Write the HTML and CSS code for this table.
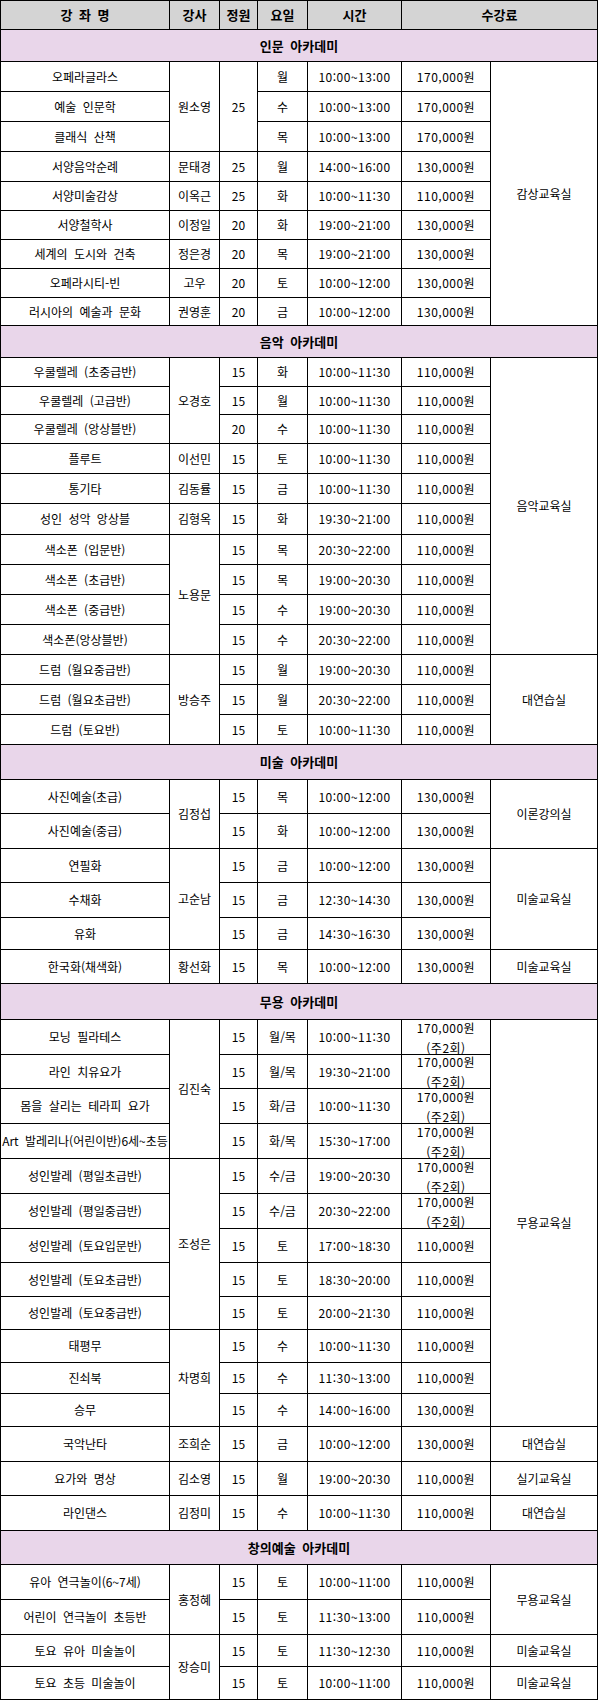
FILE: index.html
```html
<!DOCTYPE html>
<html lang="ko">
<head>
<meta charset="utf-8">
<title>강좌 안내</title>
<link rel="stylesheet" href="styles.css">
</head>
<body>
<table class="course-table">
  <colgroup>
    <col class="c-name"><col class="c-teacher"><col class="c-cap"><col class="c-day"><col class="c-time"><col class="c-fee"><col class="c-room">
  </colgroup>
  <thead>
    <tr class="h29 head">
      <th>강 좌 명</th><th>강사</th><th>정원</th><th>요일</th><th>시간</th><th colspan="2">수강료</th>
    </tr>
  </thead>
  <tbody>
    <tr class="h32 section"><td colspan="7">인문 아카데미</td></tr>
    <tr class="h30"><td>오페라글라스</td><td rowspan="3">원소영</td><td rowspan="3">25</td><td>월</td><td class="n">10:00~13:00</td><td class="n">170,000원</td><td rowspan="9">감상교육실</td></tr>
    <tr class="h30"><td>예술 인문학</td><td>수</td><td class="n">10:00~13:00</td><td class="n">170,000원</td></tr>
    <tr class="h30"><td>클래식 산책</td><td>목</td><td class="n">10:00~13:00</td><td class="n">170,000원</td></tr>
    <tr class="h30"><td>서양음악순례</td><td>문태경</td><td>25</td><td>월</td><td class="n">14:00~16:00</td><td class="n">130,000원</td></tr>
    <tr class="h29"><td>서양미술감상</td><td>이옥근</td><td>25</td><td>화</td><td class="n">10:00~11:30</td><td class="n">110,000원</td></tr>
    <tr class="h29"><td>서양철학사</td><td>이정일</td><td>20</td><td>화</td><td class="n">19:00~21:00</td><td class="n">130,000원</td></tr>
    <tr class="h29"><td>세계의 도시와 건축</td><td>정은경</td><td>20</td><td>목</td><td class="n">19:00~21:00</td><td class="n">130,000원</td></tr>
    <tr class="h29"><td>오페라시티-빈</td><td>고우</td><td>20</td><td>토</td><td class="n">10:00~12:00</td><td class="n">130,000원</td></tr>
    <tr class="h28"><td>러시아의 예술과 문화</td><td>권영훈</td><td>20</td><td>금</td><td class="n">10:00~12:00</td><td class="n">130,000원</td></tr>

    <tr class="h32 section"><td colspan="7">음악 아카데미</td></tr>
    <tr class="h29"><td>우쿨렐레 (초중급반)</td><td rowspan="3">오경호</td><td>15</td><td>화</td><td class="n">10:00~11:30</td><td class="n">110,000원</td><td rowspan="10">음악교육실</td></tr>
    <tr class="h28"><td>우쿨렐레 (고급반)</td><td>15</td><td>월</td><td class="n">10:00~11:30</td><td class="n">110,000원</td></tr>
    <tr class="h29"><td>우쿨렐레 (앙상블반)</td><td>20</td><td>수</td><td class="n">10:00~11:30</td><td class="n">110,000원</td></tr>
    <tr class="h30"><td>플루트</td><td>이선민</td><td>15</td><td>토</td><td class="n">10:00~11:30</td><td class="n">110,000원</td></tr>
    <tr class="h30"><td>통기타</td><td>김동률</td><td>15</td><td>금</td><td class="n">10:00~11:30</td><td class="n">110,000원</td></tr>
    <tr class="h31"><td>성인 성악 앙상블</td><td>김형옥</td><td>15</td><td>화</td><td class="n">19:30~21:00</td><td class="n">110,000원</td></tr>
    <tr class="h30"><td>색소폰 (입문반)</td><td rowspan="4">노용문</td><td>15</td><td>목</td><td class="n">20:30~22:00</td><td class="n">110,000원</td></tr>
    <tr class="h30"><td>색소폰 (초급반)</td><td>15</td><td>목</td><td class="n">19:00~20:30</td><td class="n">110,000원</td></tr>
    <tr class="h30"><td>색소폰 (중급반)</td><td>15</td><td>수</td><td class="n">19:00~20:30</td><td class="n">110,000원</td></tr>
    <tr class="h30"><td>색소폰(앙상블반)</td><td>15</td><td>수</td><td class="n">20:30~22:00</td><td class="n">110,000원</td></tr>
    <tr class="h30"><td>드럼 (월요중급반)</td><td rowspan="3">방승주</td><td>15</td><td>월</td><td class="n">19:00~20:30</td><td class="n">110,000원</td><td rowspan="3">대연습실</td></tr>
    <tr class="h30"><td>드럼 (월요초급반)</td><td>15</td><td>월</td><td class="n">20:30~22:00</td><td class="n">110,000원</td></tr>
    <tr class="h30"><td>드럼 (토요반)</td><td>15</td><td>토</td><td class="n">10:00~11:30</td><td class="n">110,000원</td></tr>

    <tr class="h35 section"><td colspan="7">미술 아카데미</td></tr>
    <tr class="h34"><td>사진예술(초급)</td><td rowspan="2">김정섭</td><td>15</td><td>목</td><td class="n">10:00~12:00</td><td class="n">130,000원</td><td rowspan="2">이론강의실</td></tr>
    <tr class="h35"><td>사진예술(중급)</td><td>15</td><td>화</td><td class="n">10:00~12:00</td><td class="n">130,000원</td></tr>
    <tr class="h34"><td>연필화</td><td rowspan="3">고순남</td><td>15</td><td>금</td><td class="n">10:00~12:00</td><td class="n">130,000원</td><td rowspan="3">미술교육실</td></tr>
    <tr class="h35"><td>수채화</td><td>15</td><td>금</td><td class="n">12:30~14:30</td><td class="n">130,000원</td></tr>
    <tr class="h32"><td>유화</td><td>15</td><td>금</td><td class="n">14:30~16:30</td><td class="n">130,000원</td></tr>
    <tr class="h34"><td>한국화(채색화)</td><td>황선화</td><td>15</td><td>목</td><td class="n">10:00~12:00</td><td class="n">130,000원</td><td>미술교육실</td></tr>

    <tr class="h36 section"><td colspan="7">무용 아카데미</td></tr>
    <tr class="h35"><td>모닝 필라테스</td><td rowspan="4">김진숙</td><td>15</td><td>월/목</td><td class="n">10:00~11:30</td><td class="n"><div class="two">170,000원<br>(주2회)</div></td><td rowspan="12">무용교육실</td></tr>
    <tr class="h34"><td>라인 치유요가</td><td>15</td><td>월/목</td><td class="n">19:30~21:00</td><td class="n"><div class="two">170,000원<br>(주2회)</div></td></tr>
    <tr class="h35"><td>몸을 살리는 테라피 요가</td><td>15</td><td>화/금</td><td class="n">10:00~11:30</td><td class="n"><div class="two">170,000원<br>(주2회)</div></td></tr>
    <tr class="h35"><td>Art 발레리나(어린이반)6세~초등</td><td>15</td><td>화/목</td><td class="n">15:30~17:00</td><td class="n"><div class="two">170,000원<br>(주2회)</div></td></tr>
    <tr class="h35"><td>성인발레 (평일초급반)</td><td rowspan="5">조성은</td><td>15</td><td>수/금</td><td class="n">19:00~20:30</td><td class="n"><div class="two">170,000원<br>(주2회)</div></td></tr>
    <tr class="h35"><td>성인발레 (평일중급반)</td><td>15</td><td>수/금</td><td class="n">20:30~22:00</td><td class="n"><div class="two">170,000원<br>(주2회)</div></td></tr>
    <tr class="h34"><td>성인발레 (토요입문반)</td><td>15</td><td>토</td><td class="n">17:00~18:30</td><td class="n">110,000원</td></tr>
    <tr class="h34"><td>성인발레 (토요초급반)</td><td>15</td><td>토</td><td class="n">18:30~20:00</td><td class="n">110,000원</td></tr>
    <tr class="h33"><td>성인발레 (토요중급반)</td><td>15</td><td>토</td><td class="n">20:00~21:30</td><td class="n">110,000원</td></tr>
    <tr class="h33"><td>태평무</td><td rowspan="3">차명희</td><td>15</td><td>수</td><td class="n">10:00~11:30</td><td class="n">110,000원</td></tr>
    <tr class="h31"><td>진쇠북</td><td>15</td><td>수</td><td class="n">11:30~13:00</td><td class="n">110,000원</td></tr>
    <tr class="h33"><td>승무</td><td>15</td><td>수</td><td class="n">14:00~16:00</td><td class="n">130,000원</td></tr>
    <tr class="h35"><td>국악난타</td><td>조희순</td><td>15</td><td>금</td><td class="n">10:00~12:00</td><td class="n">130,000원</td><td>대연습실</td></tr>
    <tr class="h34"><td>요가와 명상</td><td>김소영</td><td>15</td><td>월</td><td class="n">19:00~20:30</td><td class="n">110,000원</td><td>실기교육실</td></tr>
    <tr class="h35"><td>라인댄스</td><td>김정미</td><td>15</td><td>수</td><td class="n">10:00~11:30</td><td class="n">110,000원</td><td>대연습실</td></tr>

    <tr class="h34 section"><td colspan="7">창의예술 아카데미</td></tr>
    <tr class="h35"><td>유아 연극놀이(6~7세)</td><td rowspan="2">홍정혜</td><td>15</td><td>토</td><td class="n">10:00~11:00</td><td class="n">110,000원</td><td rowspan="2">무용교육실</td></tr>
    <tr class="h35"><td>어린이 연극놀이 초등반</td><td>15</td><td>토</td><td class="n">11:30~13:00</td><td class="n">110,000원</td></tr>
    <tr class="h32"><td>토요 유아 미술놀이</td><td rowspan="2">장승미</td><td>15</td><td>토</td><td class="n">11:30~12:30</td><td class="n">110,000원</td><td>미술교육실</td></tr>
    <tr class="h33"><td>토요 초등 미술놀이</td><td>15</td><td>토</td><td class="n">10:00~11:00</td><td class="n">110,000원</td><td>미술교육실</td></tr>
  </tbody>
</table>
</body>
</html>
```
FILE: styles.css
```css
html, body {
  margin: 0;
  padding: 0;
  background: #ffffff;
}

body {
  font-family: "Noto Sans CJK KR", "Noto Sans", "Liberation Sans", sans-serif;
  font-size: 12px;
  color: #000000;
}

.course-table {
  border-collapse: collapse;
  table-layout: fixed;
  width: 597px;
  border: 1px solid #000;
}

.c-name { width: 169px; }
.c-teacher { width: 50px; }
.c-cap { width: 38px; }
.c-day { width: 50px; }
.c-time { width: 94px; }
.c-fee { width: 89px; }
.c-room { width: 107px; }

.course-table th,
.course-table td {
  border: 1px solid #000;
  padding: 0;
  text-align: center;
  vertical-align: middle;
  white-space: nowrap;
  letter-spacing: 0;
  word-spacing: 3px;
  line-height: 16px;
  overflow: visible;
}

.head th {
  background: #d4d4d4;
  font-weight: bold;
  font-size: 13px;
}

.section td {
  background: #e9d6ea;
  font-weight: bold;
  font-size: 13px;
}

.course-table td.n {
  letter-spacing: 0.5px;
}

.two {
  line-height: 20px;
  margin: -4px 0 -5px;
}

.h28 { height: 28px; }
.h29 { height: 29px; }
.h30 { height: 30px; }
.h31 { height: 31px; }
.h32 { height: 32px; }
.h33 { height: 33px; }
.h34 { height: 34px; }
.h35 { height: 35px; }
.h36 { height: 36px; }
```
